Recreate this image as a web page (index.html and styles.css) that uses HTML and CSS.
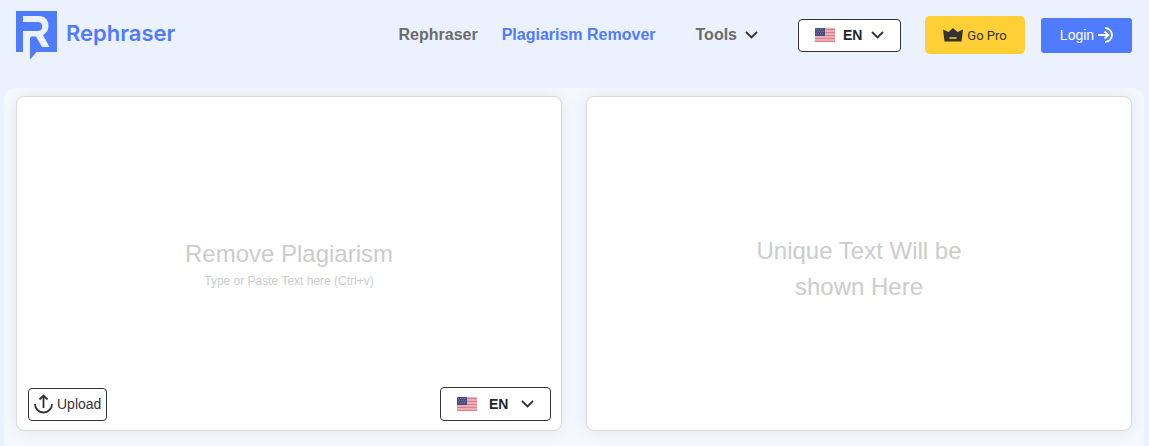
FILE: index.html
```html
<!DOCTYPE html>
<html lang="en">
<head>
    <meta charset="UTF-8">
    <meta name="viewport" content="width=device-width, initial-scale=1.0">
    <title>Plagiarism Remover - Rephraser</title>
    <link rel="stylesheet" href="styles.css">
</head>
<body>
    <!-- Shared icons -->
    <svg class="sprite" aria-hidden="true">
        <symbol id="flag-us" viewBox="0 0 20 14">
            <rect width="20" height="14" rx="1" fill="#ebadb5"/>
            <path d="M0 1.500h20M0 4.500h20M0 7.500h20M0 10.500h20M0 13.500h20" stroke="#dc7f8c" stroke-width="1"/>
            <path d="M0 1a1 1 0 0 1 1-1h9v8H0z" fill="#4b4f86"/>
            <path d="M1 1.500h8M2 3.500h8M1 5.500h8" stroke="#70759f" stroke-width="1" stroke-dasharray="1 1"/>
        </symbol>
        <symbol id="chevron" viewBox="0 0 13 8">
            <path d="M1 1l5.500 5.500L12 1" fill="none" stroke="#333" stroke-width="1.800"/>
        </symbol>
    </svg>

    <!-- Header -->
    <header class="header">
        <a href="#" class="logo">
            <svg width="41" height="49" viewBox="0 0 41 49">
                <path d="M0 0h41v41H20.500L14 48.500V41H0z" fill="#4f7bff"/>
                <path d="M7 5h16c6 0 9.500 4 9.500 10 0 4-2 7-5.500 9l6.500 12H26l-6-10.500h-4q-2 0-2 2V41H7V20h15.500c5 0 5-9 0-9H7z" fill="#ebf1ff"/>
            </svg>
            <span>Rephraser</span>
        </a>

        <nav class="nav">
            <a href="#">Rephraser</a>
            <a href="#" class="active">Plagiarism Remover</a>
            <button class="tools">Tools <svg width="13" height="8"><use href="#chevron"/></svg></button>
        </nav>

        <div class="actions">
            <div class="lang">
                <svg width="20" height="14"><use href="#flag-us"/></svg>
                <select aria-label="Site language">
                    <option>EN</option>
                </select>
                <svg width="13" height="8"><use href="#chevron"/></svg>
            </div>
            <button class="btn-pro">
                <svg width="20" height="14" viewBox="0 0 20 14">
                    <path d="M0 1.500L5.500 4 10 0l4.500 4L20 1.500 18.500 13.500h-17z" fill="#333"/>
                    <path d="M6.500 10h7" stroke="#ffd035" stroke-width="1.500"/>
                </svg>
                Go Pro
            </button>
            <button class="btn-login">
                Login
                <svg width="15" height="16" viewBox="0 0 15 16" fill="none" stroke="#fff" stroke-width="1.800">
                    <path d="M0 8h10.500M6.500 4.500L10.500 8l-4 3.500"/>
                    <path d="M7 1a7 7 0 0 1 0 14"/>
                </svg>
            </button>
        </div>
    </header>

    <!-- Tool -->
    <main class="tool">
        <section class="panel">
            <textarea id="source"></textarea>
            <label for="source" class="hint">
                <span class="hint-title">Remove Plagiarism</span>
                <span class="hint-text">Type or Paste Text here (Ctrl+v)</span>
            </label>
            <div class="panel-footer">
                <button class="btn-upload">
                    <svg width="19" height="20" viewBox="0 0 19 20" fill="none" stroke="#333" stroke-width="1.800">
                        <path d="M9.500 14V2M5.500 5.500l4-4 4 4"/>
                        <path d="M1 10a8.500 8.500 0 0 0 17 0"/>
                    </svg>
                    Upload
                </button>
                <div class="lang lang-wide">
                    <svg width="20" height="14"><use href="#flag-us"/></svg>
                    <select aria-label="Text language">
                        <option>EN</option>
                    </select>
                    <svg width="13" height="8"><use href="#chevron"/></svg>
                </div>
            </div>
        </section>

        <section class="panel panel-result">
            <p class="result-text">Unique Text Will be shown Here</p>
        </section>
    </main>

    <script>
        const source = document.getElementById('source');
        const hint = document.querySelector('.hint');

        // Hide the hint while there is text in the box
        source.addEventListener('input', () => {
            hint.hidden = source.value !== '';
        });
    </script>
</body>
</html>
```

FILE: styles.css
```css
/* Global Styling */
* {
    box-sizing: border-box;
}
body {
    font-family: "Liberation Sans", Arial, sans-serif;
    margin: 0;
    background-color: #ebf1ff;
    color: #212529;
    min-height: 100vh;
    display: flex;
    flex-direction: column;
}
button, select, textarea {
    font-family: inherit;
}
button {
    cursor: pointer;
}
a {
    text-decoration: none;
}
.sprite {
    position: absolute;
    width: 0;
    height: 0;
}

/* Header */
.header {
    display: flex;
    align-items: center;
    height: 70px;
    margin-bottom: 18px;
    padding: 0 17px 0 16px;
}
.logo {
    display: flex;
    align-items: center;
    gap: 9px;
    margin-right: auto;
    color: #4f7bff;
    font-family: Inter, sans-serif;
    font-size: 22px;
    font-weight: 600;
}
.logo span {
    padding-bottom: 4px;
}
.nav {
    display: flex;
    align-items: center;
    gap: 24px;
    margin-right: 40px;
}
.nav a, .tools {
    color: #6b6b6b;
    font-size: 16px;
    font-weight: bold;
}
.nav .active {
    color: #4f7bff;
}
.tools {
    display: flex;
    align-items: center;
    gap: 8px;
    margin-left: 16px;
    padding: 0;
    border: none;
    background: none;
}
.actions {
    display: flex;
    align-items: center;
}

/* Language Select */
.lang {
    display: flex;
    align-items: center;
    justify-content: center;
    gap: 8px;
    width: 103px;
    height: 33px;
    border: 1px solid #333;
    border-radius: 4px;
    background-color: #fff;
}
.lang-wide {
    gap: 12px;
    width: 111px;
    height: 34px;
}
.lang select {
    appearance: none;
    padding: 0;
    border: none;
    background: none;
    color: #212529;
    font-size: 14px;
    font-weight: bold;
}

/* Buttons Styling */
.btn-pro, .btn-login {
    display: flex;
    align-items: center;
    justify-content: center;
    gap: 4px;
    border: none;
}
.btn-pro {
    width: 100px;
    height: 38px;
    margin: 0 16px 0 24px;
    border-radius: 5px;
    background-color: #ffd035;
    color: #333;
    font-family: Roboto, sans-serif;
    font-size: 13px;
}
.btn-login {
    width: 91px;
    height: 35px;
    border-radius: 3px;
    background-color: #4f7bff;
    color: #fff;
    font-size: 14px;
}
.btn-upload {
    display: flex;
    align-items: center;
    gap: 4px;
    height: 33px;
    padding: 0 5px;
    border: 1px solid #333;
    border-radius: 4px;
    background-color: #fff;
    color: #333;
    font-size: 14px;
}

/* Tool */
.tool {
    flex: 1;
    display: grid;
    grid-template-columns: 1fr 1fr;
    align-items: start;
    gap: 24px;
    margin: 0 5px 0 4px;
    padding: 8px 12px 15px;
    border-radius: 12px 12px 0 0;
    background-color: #f5f9ff;
}
.panel {
    position: relative;
    display: flex;
    flex-direction: column;
    min-height: 335px;
    border: 1px solid #d9d9d9;
    border-radius: 8px;
    background-color: #fff;
    box-shadow: 0 0 16px rgba(0, 0, 0, 0.08);
}
.panel textarea {
    flex: 1;
    padding: 12px;
    border: none;
    border-radius: 8px;
    outline: none;
    background: none;
    resize: none;
    font-size: 16px;
}
.panel-footer {
    display: flex;
    align-items: center;
    justify-content: space-between;
    padding: 0 10px 9px 11px;
}

/* Hint over the empty text box */
.hint {
    position: absolute;
    inset: 0;
    display: flex;
    flex-direction: column;
    align-items: center;
    justify-content: center;
    padding-bottom: 2px;
    color: #ccc;
    pointer-events: none;
}
.hint[hidden] {
    display: none;
}
.hint-title {
    font-size: 24px;
    line-height: 36px;
}
.hint-text {
    font-size: 12px;
    line-height: 18px;
}
.panel-result {
    align-items: center;
    justify-content: center;
    padding-top: 10px;
}
.result-text {
    max-width: 240px;
    margin: 0;
    color: #ccc;
    font-size: 24px;
    line-height: 36px;
    text-align: center;
}

@media (max-width: 800px) {
    .header {
        flex-wrap: wrap;
        height: auto;
        gap: 12px;
        padding: 12px 16px;
    }
    .tool {
        grid-template-columns: 1fr;
    }
}
```
